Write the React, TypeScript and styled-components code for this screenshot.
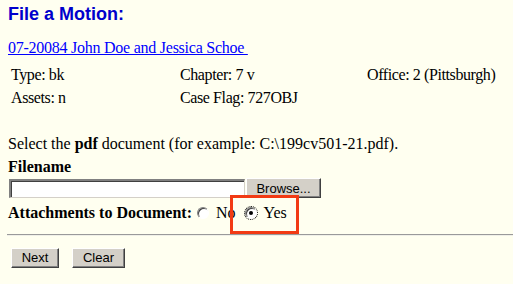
import React from "react";
import styled, { createGlobalStyle } from "styled-components";

const Global = createGlobalStyle`
  html, body { margin: 0; padding: 0; background: #fffff0; }
  body { font-family: "Liberation Serif", "Times New Roman", serif; font-size: 16px; color: #000; }
`;

const Page = styled.div`
  padding: 4px 0 0 8px;
  width: 505px;
  height: 280px;
  position: relative;
  overflow: hidden;
`;

const Title = styled.h1`
  margin: 0;
  font-family: "Liberation Sans", Arial, sans-serif;
  font-weight: bold;
  font-size: 18px;
  line-height: 21px;
  color: #0000cc;
`;

const CaseLink = styled.a`
  display: inline-block;
  margin-top: 14px;
  line-height: 18px;
  color: #0000ff;
  text-decoration: underline;
  white-space: pre;
  letter-spacing: -0.25px;
`;

const InfoGrid = styled.div`
  display: grid;
  grid-template-columns: 169px 187px auto;
  row-gap: 5px;
  margin-top: 9px;
  padding-left: 3px;
  line-height: 18px;
  letter-spacing: -0.4px;
`;

const Cell = styled.span`
  white-space: nowrap;
`;

const Instruction = styled.p`
  margin: 28px 0 0;
  line-height: 18px;
`;

const Label = styled.div`
  margin-top: 5px;
  font-weight: bold;
  line-height: 18px;
`;

const FileRow = styled.div`
  display: flex;
  align-items: center;
  margin-top: 2px;
  height: 20px;
`;

const FileInput = styled.div`
  box-sizing: border-box;
  width: 236px;
  height: 19px;
  margin-left: 1px;
  background: #fff;
  border-style: solid;
  border-width: 2px 1px 1px 2px;
  border-color: #808080 #d4d0c8 #d4d0c8 #808080;
  box-shadow: inset 1px 1px 0 #404040;
`;

const WinButton = styled.button<{ $w: number }>`
  box-sizing: border-box;
  width: ${(p) => p.$w}px;
  height: 20px;
  padding: 0;
  margin: 0;
  background: #d4d0c8;
  border-style: solid;
  border-width: 1px;
  border-color: #ffffff #404040 #404040 #ffffff;
  box-shadow: inset -1px -1px 0 #808080;
  font-family: "Liberation Sans", Arial, sans-serif;
  font-size: 13px;
  color: #000;
  line-height: 16px;
`;

const BrowseButton = styled(WinButton)`
  margin-left: 1px;
  padding-top: 1px;
`;

const AttachRow = styled.div`
  display: flex;
  align-items: center;
  margin-top: 4px;
  height: 22px;
  line-height: 18px;
`;

const AttachLabel = styled.span`
  font-weight: bold;
`;

const RadioOption = styled.label<{ $gap: number }>`
  display: inline-flex;
  align-items: center;
  margin-left: ${(p) => p.$gap}px;
  gap: 7px;
`;

const Radio = styled.span<{ $checked?: boolean; $focus?: boolean }>`
  box-sizing: border-box;
  position: relative;
  display: inline-block;
  width: 12px;
  height: 12px;
  border-radius: 50%;
  background: #fff;
  border: 1px solid;
  border-color: #808080 #ffffff #ffffff #808080;
  box-shadow: inset 1px 1px 0 #404040;
  outline: ${(p) => (p.$focus ? "1px dotted #000" : "none")};
  outline-offset: 0px;
  &::after {
    content: "";
    display: ${(p) => (p.$checked ? "block" : "none")};
    position: absolute;
    left: 3px;
    top: 3px;
    width: 4px;
    height: 4px;
    border-radius: 50%;
    background: #000;
  }
`;

const Rule = styled.hr`
  margin: 10px 0 0 -1px;
  border: 0;
  border-top: 1px solid #9a9a9a;
  border-bottom: 1px solid #f0f0e8;
  height: 0;
`;

const ButtonRow = styled.div`
  display: flex;
  gap: 13px;
  margin-top: 12px;
  padding-left: 3px;
`;

const Highlight = styled.div`
  position: absolute;
  left: 230px;
  top: 195px;
  width: 69px;
  height: 39px;
  box-sizing: border-box;
  border: 3px solid #f23a14;
  pointer-events: none;
`;

export default function App() {
  return (
    <>
      <Global />
      <Page>
        <Title>File a Motion:</Title>
        <CaseLink href="#">07-20084 John Doe and Jessica Schoe </CaseLink>
        <InfoGrid>
          <Cell>Type: bk</Cell>
          <Cell>Chapter: 7 v</Cell>
          <Cell>Office: 2 (Pittsburgh)</Cell>
          <Cell>Assets: n</Cell>
          <Cell>Case Flag: 727OBJ</Cell>
          <Cell />
        </InfoGrid>
        <Instruction>
          Select the <b>pdf</b> document (for example: C:\199cv501-21.pdf).
        </Instruction>
        <Label>Filename</Label>
        <FileRow>
          <FileInput />
          <BrowseButton $w={75}>Browse...</BrowseButton>
        </FileRow>
        <AttachRow>
          <AttachLabel>Attachments to Document:</AttachLabel>
          <RadioOption $gap={5}>
            <Radio />
            No
          </RadioOption>
          <RadioOption $gap={9}>
            <Radio $checked $focus />
            Yes
          </RadioOption>
        </AttachRow>
        <Rule />
        <ButtonRow>
          <WinButton $w={48}>Next</WinButton>
          <WinButton $w={53}>Clear</WinButton>
        </ButtonRow>
        <Highlight />
      </Page>
    </>
  );
}
